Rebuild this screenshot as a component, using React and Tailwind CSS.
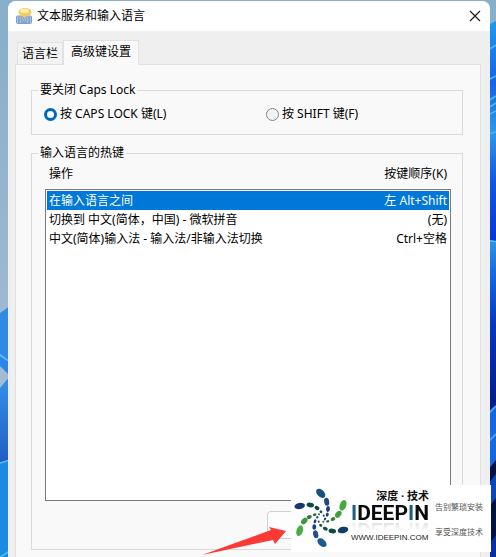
import React, { useState } from "react";

const HOTKEYS = [
  { action: "在输入语言之间", keys: "左 Alt+Shift" },
  { action: "切换到 中文(简体，中国) - 微软拼音", keys: "(无)" },
  { action: "中文(简体)输入法 - 输入法/非输入法切换", keys: "Ctrl+空格" },
];

// Each entry: cx, cy, rx, ry, rotation, colour
const PETALS = [
  [29.7, 8.3, 5.5, 3.5, 45, "#17527e"],
  [35.7, 16.7, 2.5, 4, -10, "#1b4a80"],
  [37, 24, 1.9, 3, 5, "#1d3a7c"],
  [36.3, 29.7, 1.4, 2.1, 15, "#1d3a7c"],
  [34, 34, 1.1, 1.4, 30, "#1d3a7c"],
  [52, 20.3, 3.2, 5.5, 20, "#45ab3f"],
  [47.3, 29.3, 2.7, 3.9, 40, "#3f9f3c"],
  [42, 34, 2.5, 1.8, -30, "#2d8237"],
  [36.7, 36.3, 1.6, 1.2, -15, "#1f6a33"],
  [32.3, 36.7, 1, 1, 0, "#1f6a33"],
  [52, 45, 5.3, 3.2, -10, "#123f63"],
  [41.3, 46, 3.8, 2.3, 8, "#0f4a3c"],
  [34.3, 43.7, 2.6, 1.8, 25, "#12543a"],
  [29.7, 40.3, 1.7, 1.3, 40, "#12543a"],
  [27.7, 36.7, 1, 1.1, 0, "#12543a"],
  [31, 57.7, 5.4, 3.4, 42, "#1a5c90"],
  [24.7, 49.3, 2.5, 4, -15, "#1d5088"],
  [23.3, 42, 1.9, 2.8, 0, "#1d3f80"],
  [24, 36.3, 1.3, 2, 15, "#1d3a7c"],
  [26.3, 32.3, 1.1, 1.3, 30, "#1d3a7c"],
  [8.7, 45.7, 3.2, 5.5, 18, "#49ae42"],
  [13.3, 36, 2.6, 3.8, 42, "#3b993b"],
  [18.3, 32, 2.6, 1.8, -25, "#2b7c36"],
  [23.7, 29.7, 1.8, 1.3, -10, "#1f6a33"],
  [28, 29.3, 1, 1, 0, "#1f6a33"],
  [8.7, 21, 5.3, 3.1, -10, "#15386e"],
  [19.3, 20, 3.8, 2.3, 8, "#104a48"],
  [26, 23, 2.5, 1.9, 30, "#0f4b3c"],
  [30, 26.7, 1.5, 1.3, 40, "#12543a"],
  [32.7, 30.7, 1, 1.1, 0, "#1d3a7c"],
];

function Wallpaper() {
  return (
    <svg
      className="absolute inset-0 h-full w-full"
      viewBox="0 0 496 557"
      preserveAspectRatio="none"
      aria-hidden="true"
    >
      <defs>
        <linearGradient id="sky" x1="0" y1="0" x2="0" y2="1">
          <stop offset="0" stopColor="#87aecb" />
          <stop offset="0.55" stopColor="#9db9d1" />
          <stop offset="1" stopColor="#b4c3d6" />
        </linearGradient>
        <linearGradient id="petal" x1="0" y1="0" x2="0" y2="1">
          <stop offset="0" stopColor="#3592ee" />
          <stop offset="1" stopColor="#1e5cc4" />
        </linearGradient>
        <linearGradient id="upper" x1="0" y1="0" x2="0" y2="1">
          <stop offset="0" stopColor="#1e9aec" />
          <stop offset="0.28" stopColor="#1463e4" />
          <stop offset="0.5" stopColor="#2f98ea" />
          <stop offset="0.72" stopColor="#1258e0" />
          <stop offset="1" stopColor="#0436d6" />
        </linearGradient>
        <linearGradient id="lower" x1="0" y1="0" x2="0" y2="1">
          <stop offset="0" stopColor="#2e93e4" />
          <stop offset="0.22" stopColor="#1164df" />
          <stop offset="0.5" stopColor="#0636bd" />
          <stop offset="1" stopColor="#061a86" />
        </linearGradient>
      </defs>
      <rect width="496" height="557" fill="url(#sky)" />
      <path d="M0 313 L10 306 V362 L0 354Z" fill="#2f8ae6" />
      <path d="M0 356 L10 362 V376 L0 366Z" fill="#2b86ea" />
      <path d="M0 355 L10 362" stroke="#58c4ee" strokeWidth="1.5" />
      <path d="M0 388 L10 376 V465 H0Z" fill="url(#petal)" />
      <path d="M0 463 L10 460 V557 H0Z" fill="#1b8ae2" />
      <path d="M0 463 L10 460 M0 557 L10 551" stroke="#55c0f0" strokeWidth="1.5" />
      <path d="M488 25 L496 21 V242 H488Z" fill="url(#upper)" />
      <path
        d="M488 50 L496 45 M488 80 L496 76 M488 101 L496 96 M488 108 L496 103 M488 115 L496 111 M488 134 L496 132"
        stroke="#48b9ee"
        strokeWidth="1.5"
      />
      <rect x="488" y="241" width="8" height="170" fill="url(#lower)" />
      <path d="M488 240.500 L496 241.500" stroke="#55c4ee" strokeWidth="1.5" />
      <path d="M488 414 L496 406 V490 H488Z" fill="#1567e0" />
      <path d="M488 414 L496 406 M488 442 L496 434" stroke="#3fa4ea" strokeWidth="2" />
      <path d="M488 470 L496 460 V557 H488Z" fill="#03123f" />
      <path d="M488 484 L496 474 V498 L488 508Z" fill="#0c48b8" />
      <path d="M488 545 L496 535 V557 H488Z" fill="#0b2fa0" />
    </svg>
  );
}

function KeyboardIcon() {
  return (
    <svg className="h-4 w-4" viewBox="0 0 16 16" aria-hidden="true">
      <rect x="0.500" y="8" width="15" height="7.500" rx="1" fill="#a9c4e0" stroke="#7f9fc4" />
      <path
        d="M2 10h1.500M4.500 10H6M7 10h1.500M9.500 10H11M12 10h2M2 12h2M5 12h1.500M7.500 12H9M10 12h1.500M12.500 12H14M2 14h2M5 14h6M12 14h2"
        stroke="#6489b8"
        strokeWidth="1"
      />
      <path d="M6.500 7 L8.500 10.500 L11 7Z" fill="#eebd4e" />
      <ellipse cx="9" cy="4.200" rx="6.500" ry="4.200" fill="#f4c95c" />
      <ellipse cx="8.500" cy="3" rx="4.500" ry="2.200" fill="#fdebac" />
    </svg>
  );
}

function Radio({ id, label, checked, onChange }) {
  return (
    <div className="flex items-center gap-[3px]">
      <input
        type="radio"
        id={id}
        name="capslock"
        checked={checked}
        onChange={onChange}
        className="h-[13px] w-[13px] shrink-0 appearance-none rounded-full border border-[#868686] bg-[#f3f3f3] checked:border-[3px] checked:border-[#0067c0] checked:bg-white"
      />
      <label htmlFor={id} className="whitespace-nowrap">
        {label}
      </label>
    </div>
  );
}

function Watermark() {
  return (
    <div className="absolute right-[5px] bottom-[5px] flex h-[67px] w-[200px] bg-white">
      <svg className="h-[67px] w-[60px] shrink-0" viewBox="0 0 60 67" aria-hidden="true">
        {PETALS.map(([cx, cy, rx, ry, turn, fill]) => (
          <ellipse
            key={`${cx}-${cy}`}
            cx={cx}
            cy={cy}
            rx={rx}
            ry={ry}
            fill={fill}
            transform={`rotate(${turn} ${cx} ${cy})`}
          />
        ))}
      </svg>
      <div className="flex w-[80px] shrink-0 flex-col">
        <p className="mt-1 pr-0.5 text-right text-[11px] leading-[14px] font-bold whitespace-nowrap text-[#111]">
          深度 · 技术
        </p>
        <p className="font-['Roboto',sans-serif] text-[21px] leading-[21px] font-bold whitespace-nowrap text-[#0b0b0b] [-webkit-box-reflect:below_-5px_linear-gradient(transparent_45%,rgba(0,0,0,0.2))]">
          <span className="text-[#1d5f88]">I</span>DEEP<span className="text-[#1d5f88]">I</span>N
        </p>
        <p className="mt-2 text-[8px] leading-[12px] whitespace-nowrap text-[#222] font-['Liberation_Sans',sans-serif]">
          WWW.IDEEPIN.COM
        </p>
      </div>
      <div className="flex flex-col gap-3 pt-[15px] pl-1 text-[8px] leading-[13px] whitespace-nowrap text-[#555]">
        <p>告别繁琐安装</p>
        <p>享受深度技术</p>
      </div>
    </div>
  );
}

export default function App() {
  const [choice, setChoice] = useState("caps");
  const [selected, setSelected] = useState(0);

  return (
    <div className="relative flex h-screen flex-col overflow-hidden pt-px pr-1.5 pl-2 font-['Noto_Sans','Noto_Sans_CJK_SC',sans-serif] text-[12px] leading-4 text-black">
      <Wallpaper />
      <main className="relative flex flex-1 flex-col rounded-t-lg bg-[#efefef]">
        <header className="flex h-[30px] shrink-0 items-center gap-1 rounded-t-lg bg-white pr-[7px] pl-2">
          <KeyboardIcon />
          <h1 className="flex-1 pl-px">文本服务和输入语言</h1>
          <button type="button" aria-label="关闭" className="flex h-4 w-4 items-center justify-center">
            <svg className="h-3 w-3" viewBox="0 0 12 12" aria-hidden="true">
              <path d="M1 1 L11 11 M11 1 L1 11" stroke="#1a1a1a" strokeWidth="1.2" />
            </svg>
          </button>
        </header>

        <div role="tablist" className="flex items-end pt-[9px] pl-[9px]">
          <button
            type="button"
            role="tab"
            aria-selected="false"
            className="h-[22px] w-[46px] border border-b-0 border-[#e2e2e2] bg-[#f3f3f3] whitespace-nowrap"
          >
            语言栏
          </button>
          <button
            type="button"
            role="tab"
            aria-selected="true"
            className="z-10 -mb-px h-[25px] w-[76px] border border-b-0 border-[#e0e0e0] bg-[#f9f9f9] pb-0.5 whitespace-nowrap"
          >
            高级键设置
          </button>
        </div>

        <section className="mr-[9px] ml-[7px] flex-1 border border-b-0 border-[#e0e0e0] bg-[#f9f9f9] px-[15px] pt-4 pr-[17px]">
          <fieldset className="border border-[#dadada] pb-3">
            <legend className="ml-1.5 px-0.5 leading-[18px]">要关闭 Caps Lock</legend>
            <div className="grid grid-cols-[222px_1fr] pt-[7px] pl-3">
              <Radio
                id="caps"
                label="按 CAPS LOCK 键(L)"
                checked={choice === "caps"}
                onChange={() => setChoice("caps")}
              />
              <Radio
                id="shift"
                label="按 SHIFT 键(F)"
                checked={choice === "shift"}
                onChange={() => setChoice("shift")}
              />
            </div>
          </fieldset>

          <fieldset className="mt-[9px] border border-[#dadada] px-[13px] pr-[11px] pb-[10px]">
            <legend className="-ml-[7px] px-0.5 leading-[18px]">输入语言的热键</legend>
            <div className="flex justify-between pt-1 pr-1 pl-1">
              <span id="action-heading">操作</span>
              <span>按键顺序(K)</span>
            </div>
            <ul
              role="listbox"
              aria-labelledby="action-heading"
              className="mt-[7px] h-[312px] border border-[#7a7a82] bg-white p-px"
            >
              {HOTKEYS.map((item, index) => (
                <li
                  key={item.action}
                  role="option"
                  aria-selected={index === selected}
                  onClick={() => setSelected(index)}
                  className={
                    index === selected
                      ? "flex h-[19px] items-center justify-between bg-[#0078d7] px-0.5 text-white"
                      : "flex h-[19px] items-center justify-between px-0.5"
                  }
                >
                  <span>{item.action}</span>
                  <span>{item.keys}</span>
                </li>
              ))}
            </ul>
            <div className="flex justify-end pt-[10px]">
              <button
                type="button"
                aria-label="更改按键顺序"
                className="h-7 w-[184px] rounded border border-[#d0d0d0] bg-[#fdfdfd]"
              />
            </div>
          </fieldset>
        </section>
      </main>

      <svg
        className="absolute right-[208px] bottom-0 h-[30px] w-[86px]"
        viewBox="0 0 86 30"
        aria-hidden="true"
      >
        <path d="M0 28 L69 3 L67 0 L84 4 L73 17 L71 13 Z" fill="#fb3a36" />
      </svg>
      <Watermark />
    </div>
  );
}
